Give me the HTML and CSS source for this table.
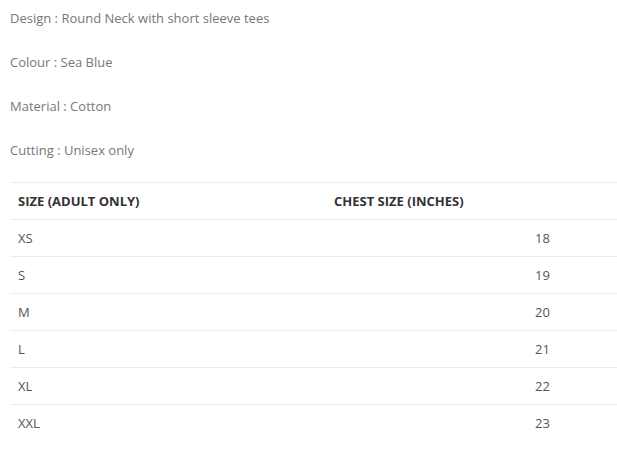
FILE: index.html
```html
<!DOCTYPE html>
<html>
<head>
<meta charset="utf-8">
<link rel="stylesheet" href="styles.css">
</head>
<body>
<div class="desc">
  <p>Design : Round Neck with short sleeve tees</p>
  <p>Colour : Sea Blue</p>
  <p>Material : Cotton</p>
  <p>Cutting : Unisex only</p>
  <table class="sizes">
    <thead>
      <tr><th class="c1">SIZE (ADULT ONLY)</th><th class="c2">CHEST SIZE (INCHES)</th><th class="c3"></th></tr>
    </thead>
    <tbody>
      <tr><td>XS</td><td></td><td>18</td></tr>
      <tr><td>S</td><td></td><td>19</td></tr>
      <tr><td>M</td><td></td><td>20</td></tr>
      <tr><td>L</td><td></td><td>21</td></tr>
      <tr><td>XL</td><td></td><td>22</td></tr>
      <tr><td>XXL</td><td></td><td>23</td></tr>
    </tbody>
  </table>
</div>
</body>
</html>
```
FILE: styles.css
```css
html, body {
  margin: 0;
  background: #fff;
}
body {
  font-family: "Open Sans", sans-serif;
  font-size: 13px;
  color: #777;
}
.desc {
  padding: 6px 0 0 10px;
}
.desc p {
  margin: 0 0 20px;
  line-height: 24px;
}
.sizes {
  border-collapse: collapse;
  width: 607px;
  table-layout: fixed;
}
.sizes th, .sizes td {
  border-top: 1px solid #ebebeb;
  padding: 8px 8px;
  line-height: 20px;
  text-align: left;
  vertical-align: middle;
}
.sizes th {
  font-weight: 700;
  color: #333;
}
.sizes td {
  color: #555;
}
.c1 { width: 300px; }
.c2 { width: 185px; }
.c3 { width: 74px; }
```
